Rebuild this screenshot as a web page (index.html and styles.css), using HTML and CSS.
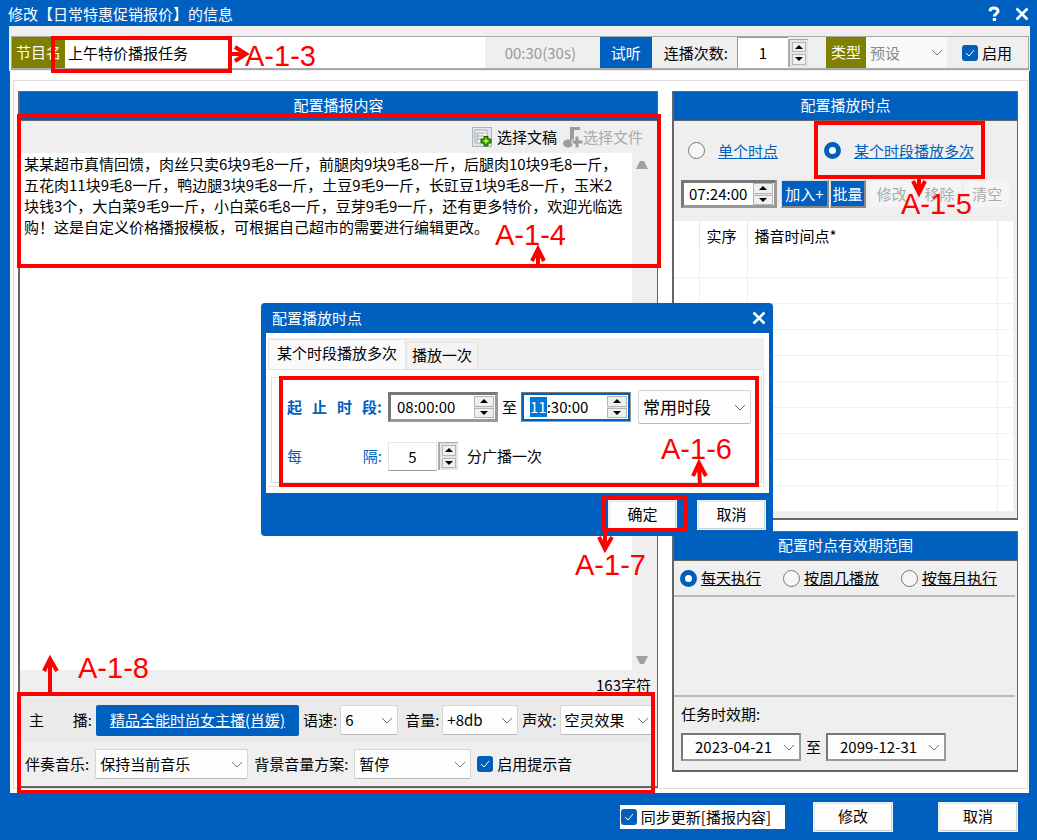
FILE: index.html
```
<!DOCTYPE html>
<html lang="zh-CN">
<head>
  <meta charset="UTF-8">
  <meta name="viewport" content="width=device-width, initial-scale=1.0">
  <title>修改【日常特惠促销报价】的信息</title>
  <link rel="stylesheet" href="styles.css">
</head>
<body>

<div class="window">
  <header class="titlebar">
    <h1>修改【日常特惠促销报价】的信息</h1>
    <button class="title-btn" aria-label="帮助">
      <svg width="14" height="16" viewBox="0 0 14 16"><path d="M3 5.2C3 1 11 1 11 5c0 2.600-3.600 2.600-3.600 5.600" fill="none" stroke="#fff" stroke-width="3"/><rect x="5.800" y="12" width="3.200" height="3" fill="#fff"/></svg>
    </button>
    <button class="title-btn" aria-label="关闭">
      <svg width="14" height="14" viewBox="0 0 14 14"><path d="M1.500 1.500l11 11M12.500 1.500l-11 11" stroke="#fff" stroke-width="2.600"/></svg>
    </button>
  </header>

  <div class="toolbar">
    <div class="toolbar-row">
      <label class="tag" for="nome">节目名</label>
      <input class="name-input" id="nome" type="text" value="上午特价播报任务">
      <span class="duration">00:30(30s)</span>
      <button class="btn-listen">试听</button>
      <label class="repeat-label" for="repeat">连播次数:</label>
      <input class="num repeat-input" id="repeat" type="text" value="1">
      <span class="spin">
        <button aria-label="增加"><svg width="8" height="4" viewBox="0 0 8 4"><path d="M4 0l4 4H0z"/></svg></button>
        <button aria-label="减少"><svg width="8" height="4" viewBox="0 0 8 4"><path d="M0 0h8L4 4z"/></svg></button>
      </span>
      <label class="tag tag-type" for="type">类型</label>
      <select class="type-select" id="type" disabled><option>预设</option></select>
      <label class="check enable"><input type="checkbox" checked>启用</label>
    </div>
  </div>

  <main class="content">
    <div class="frame">

      <section class="panel panel-text">
        <h2>配置播报内容</h2>
        <div class="text-tools">
          <button class="tool-btn">
            <svg width="20" height="20" viewBox="0 0 20 20"><rect x="0.500" y="0.500" width="19" height="19" fill="#dfe5ea" stroke="#a9b4bd"/><path d="M3 3h12v13H3z" fill="#f6f6f6" stroke="#a5acb1"/><path d="M5 6h8M5 9h7M5 12h5M5 6v9" stroke="#9a9fa3"/><path d="M12 9.500h4V12h3v4h-3v3h-4v-3H9v-4h3z" fill="#2f9e14" stroke="#176607"/><path d="M14 11.500v5M11.500 14h5" stroke="#d9f03a" stroke-width="1.500"/></svg>
            选择文稿
          </button>
          <button class="tool-btn tool-file" disabled>
            <svg width="20" height="22" viewBox="0 0 20 22"><path d="M7 1h10v3h-6v13H7z" fill="#9c9c9c"/><ellipse cx="5" cy="17.500" rx="5" ry="4" fill="#9c9c9c"/><path d="M12 10h4v4h4v4h-4v4h-4v-4H9v-4h3z" fill="#9c9c9c" stroke="#efefef"/></svg>选择文件
          </button>
        </div>
        <div class="editor">
          <textarea aria-label="播报内容">某某超市真情回馈，肉丝只卖6块9毛8一斤，前腿肉9块9毛8一斤，后腿肉10块9毛8一斤，五花肉11块9毛8一斤，鸭边腿3块9毛8一斤，土豆9毛9一斤，长豇豆1块9毛8一斤，玉米2块钱3个，大白菜9毛9一斤，小白菜6毛8一斤，豆芽9毛9一斤，还有更多特价，欢迎光临选购！这是自定义价格播报模板，可根据自己超市的需要进行编辑更改。</textarea>
          <div class="scroll">
            <button aria-label="向上"><svg width="12" height="8" viewBox="0 0 12 8"><path d="M4 0h4l4 8H0z"/></svg></button>
            <button aria-label="向下"><svg width="12" height="8" viewBox="0 0 12 8"><path d="M0 0h12L8 8H4z"/></svg></button>
          </div>
        </div>
        <div class="counter">163字符</div>
        <div class="voice-row">
          <span class="spread voice-name"><span>主</span><span>播:</span></span>
          <button class="btn-voice">精品全能时尚女主播(肖媛)</button>
          <label for="speed">语速:</label>
          <select class="select-speed" id="speed"><option>6</option></select>
          <label for="volume">音量:</label>
          <select class="select-volume" id="volume"><option>+8db</option></select>
          <label for="effect">声效:</label>
          <select class="select-effect" id="effect"><option>空灵效果</option></select>
        </div>
        <div class="music-row">
          <label for="music">伴奏音乐:</label>
          <select class="select-music" id="music"><option>保持当前音乐</option></select>
          <label for="bgplan">背景音量方案:</label>
          <select class="select-plan" id="bgplan"><option>暂停</option></select>
          <label class="check"><input type="checkbox" checked>启用提示音</label>
        </div>
      </section>

      <div class="side">
        <section class="panel">
          <h2>配置播放时点</h2>
          <div class="mode-row">
            <input type="radio" name="mode" id="mode-one"><label for="mode-one"><a href="#">单个时点</a></label>
            <input class="mode-second" type="radio" name="mode" id="mode-many" checked><label for="mode-many"><a href="#">某个时段播放多次</a></label>
          </div>
          <div class="time-row">
            <span class="time-box time-point">
              <input type="text" value="07:24:00" aria-label="时点">
              <span class="spin spin-small">
                <button aria-label="增加"><svg width="8" height="4" viewBox="0 0 8 4"><path d="M4 0l4 4H0z"/></svg></button>
                <button aria-label="减少"><svg width="8" height="4" viewBox="0 0 8 4"><path d="M0 0h8L4 4z"/></svg></button>
              </span>
            </span>
            <button class="btn-raised btn-add">加入+</button>
            <button class="btn-raised btn-batch">批量</button>
            <button class="btn-flat" disabled>修改</button>
            <button class="btn-flat" disabled>移除</button>
            <button class="btn-flat" disabled>清空</button>
          </div>
          <table class="points">
            <thead>
              <tr><th class="col-mark"></th><th class="col-order">实序</th><th>播音时间点*</th><th class="col-end"></th></tr>
            </thead>
            <tbody>
              <tr><td></td><td></td><td></td><td></td></tr>
              <tr><td></td><td></td><td></td><td></td></tr>
              <tr><td></td><td></td><td></td><td></td></tr>
              <tr><td></td><td></td><td></td><td></td></tr>
              <tr><td></td><td></td><td></td><td></td></tr>
              <tr><td></td><td></td><td></td><td></td></tr>
              <tr><td></td><td></td><td></td><td></td></tr>
              <tr><td></td><td></td><td></td><td></td></tr>
              <tr><td></td><td></td><td></td><td></td></tr>
              <tr><td></td><td></td><td></td><td></td></tr>
            </tbody>
          </table>
        </section>

        <section class="panel">
          <h2>配置时点有效期范围</h2>
          <div class="range-row">
            <label><input type="radio" name="range" checked><u>每天执行</u></label>
            <label><input type="radio" name="range"><u>按周几播放</u></label>
            <label><input type="radio" name="range"><u>按每月执行</u></label>
          </div>
          <div class="range-detail"></div>
          <div class="valid">
            <label class="valid-label" for="date-from">任务时效期:</label>
            <div class="valid-row">
              <select class="date" id="date-from"><option>2023-04-21</option></select>
              <label for="date-to">至</label>
              <select class="date" id="date-to"><option>2099-12-31</option></select>
            </div>
          </div>
        </section>
      </div>

    </div>
  </main>

  <footer class="footer">
    <label class="check sync"><input type="checkbox" checked>同步更新[播报内容]</label>
    <button class="btn-win">修改</button>
    <button class="btn-win">取消</button>
  </footer>

  <!-- Diálogo de horários -->
  <div class="dialog" role="dialog" aria-label="配置播放时点">
    <div class="dialog-title">
      <span>配置播放时点</span>
      <button class="title-btn" aria-label="关闭">
        <svg width="14" height="14" viewBox="0 0 14 14"><path d="M1.500 1.500l11 11M12.500 1.500l-11 11" stroke="#fff" stroke-width="2.600"/></svg>
      </button>
    </div>
    <div class="dialog-body">
      <div class="tabs">
        <button class="tab tab-active">某个时段播放多次</button>
        <button class="tab">播放一次</button>
      </div>
      <div class="tab-pane">
        <div class="form">
          <div class="form-row">
            <label class="spread form-label form-label-bold" for="start"><span>起</span><span>止</span><span>时</span><span>段:</span></label>
            <span class="time-box time-range">
              <input id="start" type="text" value="08:00:00">
              <span class="spin spin-small">
                <button aria-label="增加"><svg width="8" height="4" viewBox="0 0 8 4"><path d="M4 0l4 4H0z"/></svg></button>
                <button aria-label="减少"><svg width="8" height="4" viewBox="0 0 8 4"><path d="M0 0h8L4 4z"/></svg></button>
              </span>
            </span>
            <label class="to" for="end">至</label>
            <span class="time-box time-range time-focus">
              <input id="end" type="text" value="11:30:00">
              <span class="spin spin-small">
                <button aria-label="增加"><svg width="8" height="4" viewBox="0 0 8 4"><path d="M4 0l4 4H0z"/></svg></button>
                <button aria-label="减少"><svg width="8" height="4" viewBox="0 0 8 4"><path d="M0 0h8L4 4z"/></svg></button>
              </span>
            </span>
            <select class="select-common" aria-label="常用时段"><option>常用时段</option></select>
          </div>
          <div class="form-row">
            <label class="spread form-label" for="every"><span>每</span><span>隔:</span></label>
            <input class="num every-input" id="every" type="text" value="5">
            <span class="spin">
              <button aria-label="增加"><svg width="8" height="4" viewBox="0 0 8 4"><path d="M4 0l4 4H0z"/></svg></button>
              <button aria-label="减少"><svg width="8" height="4" viewBox="0 0 8 4"><path d="M0 0h8L4 4z"/></svg></button>
            </span>
            <span class="every-text">分广播一次</span>
          </div>
        </div>
      </div>
    </div>
    <div class="dialog-footer">
      <button class="btn-win">确定</button>
      <button class="btn-win">取消</button>
    </div>
  </div>

  <!-- Marcações dos passos -->
  <svg class="marks" width="1037" height="840" viewBox="0 0 1037 840">
    <g class="mark-line">
      <rect x="53" y="38" width="177" height="33"/>
      <path d="M232 54h14M235 47l11 7-11 7"/>
      <rect x="19" y="116" width="640" height="150"/>
      <path d="M538 266v-17M532 261l6-12 6 12"/>
      <rect x="816" y="123" width="167" height="54"/>
      <path d="M919 175v17M913 181l6 12 6-12"/>
      <rect x="281" y="378" width="476" height="107"/>
      <path d="M700 486l-1-22M693 476l6-13 7 13"/>
      <rect x="604" y="498" width="81" height="32"/>
      <path d="M605 531v17M599 537l6 12 7-12"/>
      <rect x="19" y="694" width="634" height="98"/>
      <path d="M50 693v-33M44 671l6-12 7 12"/>
    </g>
    <g class="mark-text">
      <text x="245" y="66">A-1-3</text>
      <text x="495" y="245">A-1-4</text>
      <text x="901" y="214">A-1-5</text>
      <text x="661" y="459">A-1-6</text>
      <text x="575" y="575">A-1-7</text>
      <text x="78" y="678">A-1-8</text>
    </g>
  </svg>
</div>

<script>
  // Seleciona a hora do campo final
  const end = document.getElementById('end');
  end.focus();
  end.setSelectionRange(0, 2);
</script>

</body>
</html>
```
FILE: styles.css
```
* {
  box-sizing: border-box;
}
body {
  margin: 0;
  font-family: "Noto Sans CJK SC", sans-serif;
  font-size: 15px;
  line-height: 20px;
  color: #000;
  background-color: #0060c0;
}
button, input, select, textarea {
  margin: 0;
  padding: 0;
  border: 0;
  border-radius: 0;
  font: inherit;
  color: inherit;
  outline: none;
}
button {
  white-space: nowrap;
}
label {
  white-space: nowrap;
}
h1, h2 {
  margin: 0;
  font-size: 15px;
  font-weight: normal;
  color: #fff;
}
.window {
  position: relative;
  display: flex;
  flex-direction: column;
  min-height: 100vh;
  background-color: #0060c0;
}
.titlebar {
  display: flex;
  align-items: center;
  gap: 14px;
  height: 26px;
  padding: 2px 8px 0;
}
.titlebar h1 {
  flex: 1;
}
.title-btn {
  display: flex;
  background: none;
}

/* Controles */
select {
  appearance: none;
  padding: 0 20px 0 4px;
  height: 30px;
  border: 1px solid #d4d4d4;
  border-bottom-color: #b8b8b8;
  border-radius: 2px;
  background: #fdfdfd url("data:image/svg+xml,%3Csvg xmlns='http://www.w3.org/2000/svg' width='12' height='7'%3E%3Cpath d='M1 1l5 5 5-5' fill='none' stroke='%23777'/%3E%3C/svg%3E") no-repeat right 4px center;
}
input[type="checkbox"] {
  appearance: none;
  width: 16px;
  height: 16px;
  border-radius: 3px;
  border: 1px solid #888;
}
input[type="checkbox"]:checked {
  border: 0;
  background: #0060b8 url("data:image/svg+xml,%3Csvg xmlns='http://www.w3.org/2000/svg' width='10' height='8'%3E%3Cpath d='M1 4l3 3 5-6' fill='none' stroke='%23fff'/%3E%3C/svg%3E") no-repeat center;
}
input[type="radio"] {
  appearance: none;
  width: 17px;
  height: 17px;
  border: 1px solid #777;
  border-radius: 50%;
  background-color: #f6f6f6;
}
input[type="radio"]:checked {
  border: 5px solid #0060b8;
  background-color: #fff;
}
.check {
  display: flex;
  align-items: center;
  gap: 4px;
}
.num {
  text-align: center;
  background-color: #fff;
}
.spin {
  display: flex;
  flex-direction: column;
  gap: 2px;
  width: 20px;
  height: 28px;
  padding: 2px;
  background-color: #e4e4e4;
  border-left: 2px solid #aaa;
  border-top: 1px solid #aaa;
}
.spin button {
  flex: 1;
  display: flex;
  align-items: center;
  justify-content: center;
  background-color: #efefef;
  border: 1px solid #b5b5b5;
}
.spin-small {
  height: 22px;
  padding: 0;
  border: 0;
  gap: 1px;
}
.spread {
  display: flex;
  justify-content: space-between;
}
.time-box {
  display: flex;
  align-items: center;
  background-color: #fff;
  border: 3px solid #777;
  border-right-color: #999;
  border-bottom-color: #999;
}
.time-box input {
  flex: 1;
  min-width: 0;
  background: none;
}
.btn-win {
  width: 80px;
  height: 30px;
  padding-bottom: 2px;
  background-color: #fdfdfd;
  border: 2px solid #e6e6e6;
  border-right-color: #d0d0d0;
  border-bottom-color: #d0d0d0;
  outline: 1px solid #f2f2f2;
  outline-offset: -1px;
}

/* Barra superior */
.toolbar {
  margin: 0 7px 0 9px;
  padding: 10px 1px 1px 2px;
  background-color: #efefef;
}
.toolbar-row {
  display: flex;
  align-items: center;
  height: 34px;
  border: 1px solid #a9a9a9;
  border-bottom-width: 2px;
}
.tag {
  align-self: stretch;
  width: 53px;
  line-height: 29px;
  text-align: center;
  color: #fff;
  background-color: #808000;
}
.tag-type {
  width: 40px;
  margin-left: 18px;
}
.name-input {
  flex: 1;
  min-width: 0;
  align-self: stretch;
  padding: 0 3px;
  background-color: #fff;
}
.duration {
  width: 115px;
  padding-right: 4px;
  text-align: center;
  color: #999;
}
.btn-listen {
  align-self: stretch;
  width: 52px;
  color: #fff;
  background-color: #0060c0;
}
.repeat-label {
  margin: 0 9px 0 12px;
}
.repeat-input {
  align-self: stretch;
  width: 51px;
  border-left: 1px solid #999;
  border-top: 1px solid #999;
}
.type-select {
  align-self: stretch;
  height: auto;
  width: 81px;
  border: 0;
  color: #888;
  opacity: 1;
  background-color: #f9f9f9;
}
.enable {
  width: 81px;
  padding-left: 15px;
}

/* Área principal */
.content {
  flex: 1;
  display: flex;
  margin: 0 8px 0 10px;
  padding: 9px 1px 4px 3px;
  background-color: #fff;
}
.frame {
  flex: 1;
  display: grid;
  grid-template-columns: 640fr 346fr;
  gap: 14px;
  padding: 10px 9px 0 4px;
  border: 1px solid #ddd;
}
.panel {
  min-width: 0;
  background-color: #efefef;
  border: 1px solid #666;
  border-width: 1px 1px 2px 2px;
}
.panel h2 {
  height: 29px;
  line-height: 26px;
  text-align: center;
  background-color: #0060c0;
  border-bottom: 1px solid #666;
}
.side {
  display: flex;
  flex-direction: column;
  gap: 11px;
  min-width: 0;
}
.panel-text {
  display: flex;
  flex-direction: column;
}
.text-tools {
  display: flex;
  justify-content: flex-end;
  gap: 6px;
  height: 32px;
  padding-right: 14px;
}
.tool-btn {
  display: flex;
  align-items: center;
  gap: 5px;
  background: none;
}
.tool-file {
  gap: 0;
  color: #aaa;
}
.editor {
  flex: 1;
  display: flex;
}
.editor textarea {
  flex: 1;
  min-width: 0;
  padding: 0 6px 0 4px;
  line-height: 21px;
  resize: none;
  overflow: hidden;
  background-color: #fff;
}
.scroll {
  display: flex;
  flex-direction: column;
  justify-content: space-between;
  align-items: center;
  width: 25px;
  padding: 8px 5px 6px 0;
}
.scroll button {
  display: flex;
  background: none;
}
.scroll path {
  fill: #a0a0a0;
}
.counter {
  height: 28px;
  padding: 5px 6px 0 0;
  text-align: right;
}
.voice-row, .music-row {
  display: flex;
  align-items: center;
  gap: 4px;
  height: 44px;
  padding-left: 5px;
}
.voice-row {
  padding-left: 9px;
  background-color: #eaeaea;
}
.voice-name {
  width: 63px;
}
.btn-voice {
  width: 203px;
  height: 31px;
  border-radius: 2px;
  color: #fff;
  text-decoration: underline;
  background-color: #0060c0;
}
.voice-row label + select {
  margin-left: -1px;
}
.select-speed {
  width: 58px;
  margin-right: 3px;
}
.select-volume {
  width: 76px;
}
.select-effect {
  flex: 1;
  min-width: 0;
  margin-right: 3px;
}
.music-row label + select {
  margin-left: 2px;
  margin-right: 2px;
}
.select-music {
  width: 153px;
}
.select-plan {
  width: 117px;
}

/* Horários */
.mode-row {
  display: flex;
  align-items: center;
  gap: 13px;
  height: 59px;
  padding-left: 14px;
}
.mode-row a {
  color: #0060c0;
}
.mode-second {
  margin-left: 33px;
}
.time-row {
  display: flex;
  align-items: center;
  gap: 4px;
  padding: 0 8px 13px 7px;
}
.time-point {
  width: 96px;
  height: 28px;
  padding: 0 1px 0 5px;
}
.btn-raised {
  height: 28px;
  color: #fff;
  background-color: #0060c0;
  border: 1px solid #ddd;
  border-right: 2px solid #888;
  border-bottom: 2px solid #888;
}
.btn-add {
  width: 48px;
}
.btn-batch {
  width: 36px;
  margin-left: -3px;
}
.btn-flat {
  flex: 1;
  height: 26px;
  color: #aaa;
  background-color: #f5f5f5;
  border-radius: 3px;
}
.points {
  width: calc(100% - 4px);
  margin-bottom: 7px;
  table-layout: fixed;
  border-collapse: collapse;
  background-color: #fff;
}
.points th {
  height: 30px;
  padding: 0 7px;
  font-weight: normal;
  text-align: left;
  border-right: 1px solid #e8e8e8;
}
.points td {
  height: 26px;
  padding: 0;
  border-right: 1px solid #f0f0f0;
  border-bottom: 1px solid #f0f0f0;
}
.points th:last-child, .points td:last-child {
  border-right: 0;
}
.points tr:last-child td {
  border-bottom: 0;
}
.points .col-mark {
  width: 25px;
}
.points .col-order {
  width: 48px;
}
.points .col-end {
  width: 16px;
}

/* Validade */
.range-row {
  display: flex;
  gap: 22px;
  height: 34px;
  padding-left: 6px;
}
.range-row label {
  display: flex;
  align-items: center;
  gap: 4px;
}
.range-detail {
  height: 102px;
  margin-right: 2px;
  border-top: 2px solid #bbb;
  border-bottom: 2px solid #bbb;
}
.valid {
  padding: 7px 7px 9px;
}
.valid-row {
  display: flex;
  align-items: center;
  gap: 5px;
  margin-top: 9px;
}
.date {
  width: 120px;
  height: 28px;
  padding: 0 20px 0 12px;
  border: 2px solid #777;
  border-right-color: #999;
  border-bottom-color: #999;
  border-radius: 0;
}

/* Rodapé */
.footer {
  display: flex;
  align-items: center;
  justify-content: flex-end;
  height: 47px;
  padding: 0 19px 0 0;
}
.sync {
  height: 24px;
  padding: 0 14px 0 1px;
  background-color: #fff;
}
.footer .btn-win {
  margin-left: 45px;
}
.footer .sync + .btn-win {
  margin-left: 28px;
}

/* Diálogo */
.dialog {
  position: absolute;
  left: 261px;
  top: 303px;
  width: 512px;
  padding: 0 4px 0 5px;
  border-radius: 4px;
  background-color: #0060c0;
}
.dialog-title {
  display: flex;
  align-items: center;
  justify-content: space-between;
  height: 30px;
  padding: 0 3px 0 6px;
  color: #fff;
}
.dialog-body {
  padding: 5px 5px 6px 2px;
  background-color: #fff;
}
.tabs {
  display: flex;
  align-items: flex-end;
  height: 31px;
  background-color: #efefef;
}
.tab {
  height: 27px;
  padding: 0 5px 2px;
  background-color: #f3f3f3;
  border: 1px solid #e4e4e4;
  border-bottom: 0;
}
.tab-active {
  height: 30px;
  padding: 0 8px 4px;
  background-color: #fafafa;
}
.tab-pane {
  padding: 7px 1px 3px 3px;
  border: 1px solid #e0e0e0;
  border-left-width: 0;
}
.form {
  padding: 12px 9px 9px 15px;
  border: 1px solid #ddd;
}
.form-row {
  display: flex;
  align-items: center;
  height: 34px;
}
.form-row + .form-row {
  margin-top: 15px;
}
.form-label {
  width: 95px;
  margin-right: 6px;
  color: #0060c0;
}
.form-label-bold {
  font-weight: bold;
}
.time-range {
  width: 110px;
  height: 30px;
  padding: 0 1px 0 6px;
}
.time-focus {
  outline: 2px solid #0060c0;
  outline-offset: -3px;
}
.time-focus ::selection {
  color: #fff;
  background-color: #0078d7;
}
.to {
  margin: 0 4px;
}
.select-common {
  width: 113px;
  height: 34px;
  margin-left: 7px;
  font-size: 17px;
}
.every-input {
  width: 49px;
  height: 29px;
  margin-right: 1px;
  border: 1px solid #e4e4e4;
  border-bottom-color: #999;
}
.every-text {
  margin-left: 9px;
}
.dialog-footer {
  display: flex;
  justify-content: flex-end;
  gap: 20px;
  height: 43px;
  padding: 7px 3px 0 0;
}
.dialog-footer .btn-win {
  width: 69px;
}

/* Marcações */
.marks {
  position: absolute;
  left: 0;
  top: 0;
  pointer-events: none;
}
.mark-line {
  fill: none;
  stroke: #f00;
  stroke-width: 4px;
}
.mark-text {
  fill: #f00;
  font-family: "Liberation Sans", sans-serif;
  font-size: 29px;
}
```
